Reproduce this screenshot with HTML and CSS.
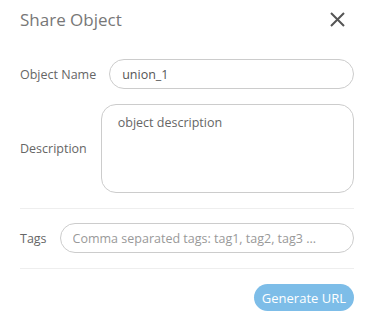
FILE: index.html
```html
<!DOCTYPE html>
<html lang="en">
<head>
  <meta charset="UTF-8">
  <meta name="viewport" content="width=device-width, initial-scale=1.0">
  <title>Share Object</title>
  <link rel="stylesheet" href="styles.css">
</head>
<body>
  <div class="dialog">
    <div class="header">
      <p class="title">Share Object</p>
      <button class="close">
        <svg width="15" height="15" viewBox="0 0 15 15"><path d="M1 1L14 14M14 1L1 14" stroke="#555" stroke-width="2"/></svg>
      </button>
    </div>

    <div class="row name-row">
      <label class="label">Object Name</label>
      <input class="field" type="text" value="union_1">
    </div>

    <div class="row desc-row">
      <label class="label">Description</label>
      <textarea class="field area" placeholder="object description"></textarea>
    </div>

    <div class="row tags-row">
      <label class="label">Tags</label>
      <input class="field" type="text" placeholder="Comma separated tags: tag1, tag2, tag3 ...">
    </div>

    <div class="footer">
      <button class="generate">Generate URL</button>
    </div>
  </div>
</body>
</html>
```

FILE: styles.css
```css
*{
  box-sizing: border-box;
  font-family: 'Open Sans', 'Liberation Sans', sans-serif;
}

body{
  margin: 0;
  background-color: white;
}

.dialog{
  padding: 0 11px 0 20px;
}

.header{
  display: flex;
  justify-content: space-between;
  align-items: center;
  height: 38px;
  padding-top: 1px;
}
.title{
  margin: 0;
  font-size: 17px;
  color: #777;
}
.close{
  border: none;
  background: transparent;
  padding: 0;
  margin-right: 9px;
  width: 15px;
  height: 15px;
  cursor: pointer;
}

.row{
  display: flex;
  align-items: center;
}
.label{
  font-size: 12.5px;
  color: #666;
}

.field{
  flex: 1;
  border: 1px solid #ccc;
  border-radius: 15px;
  height: 30px;
  padding: 0 12px;
  font-size: 12.5px;
  color: #555;
  outline: none;
}
.field::placeholder{
  color: #999;
}

.name-row{
  margin-top: 21px;
  gap: 13px;
}
.desc-row{
  margin-top: 15px;
  gap: 14px;
  padding-bottom: 15px;
  border-bottom: 1px solid #eee;
}
.area{
  height: 89px;
  padding: 9px 16px;
  resize: none;
  border-radius: 15px;
}
.area::placeholder{
  color: #666;
}

.tags-row{
  gap: 13px;
  padding: 14px 0 15px;
  border-bottom: 1px solid #eee;
}

.footer{
  display: flex;
  justify-content: flex-end;
  padding-top: 15px;
}
.generate{
  border: none;
  background-color: #7dbde8;
  color: white;
  font-size: 13px;
  height: 27px;
  padding: 0 8px;
  border-radius: 14px;
}
```
